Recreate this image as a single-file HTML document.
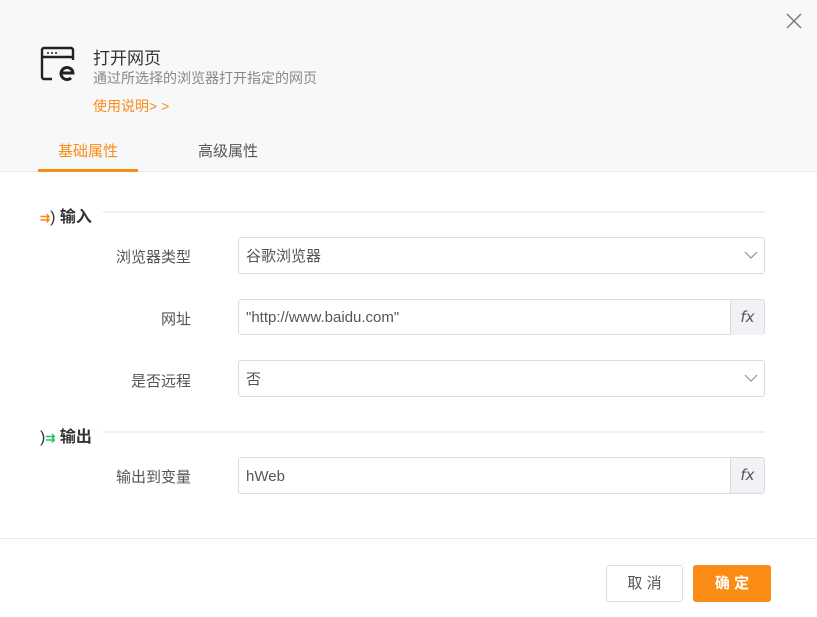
<!DOCTYPE html>
<html><head><meta charset="utf-8"><style>
*{box-sizing:border-box;margin:0;padding:0}
body{width:817px;height:617px;background:#fff;font-family:"Liberation Sans","Noto Sans CJK SC",sans-serif;position:relative;overflow:hidden;color:#333}
.hdr{position:absolute;left:0;top:0;width:817px;height:172px;background:#f7f8fa;border-bottom:1px solid #e8eaee}
.abs{position:absolute;white-space:nowrap}
.inp{position:absolute;left:238px;width:527px;height:37px;border:1px solid #d9dce3;border-radius:3px;background:#fff;font-size:15px;color:#555;padding-left:7px;line-height:37px}
.fx{position:absolute;right:0;top:0;width:34px;height:35px;background:#f0f2f5;border-left:1px solid #d9dce3;font-family:"DejaVu Sans",sans-serif;font-style:italic;font-size:15px;text-align:center;line-height:35px;color:#555}
.lbl{position:absolute;right:626px;font-size:15px;color:#555;white-space:nowrap}
.chev{position:absolute;right:6px;top:11px}
.sec{position:absolute;left:40px;font-size:16px;font-weight:600;color:#333}
.line{position:absolute;height:2px;background:#eef0f3}
</style></head><body>
<div class="hdr"></div>
<svg class="abs" style="left:785px;top:12px" width="18" height="18" viewBox="0 0 18 18"><path d="M2 2L16 16M16 2L2 16" stroke="#777" stroke-width="1.4"/></svg>
<svg class="abs" style="left:40px;top:46px" width="36" height="37" viewBox="0 0 36 37">
<path d="M12 33H4a2 2 0 0 1-2-2V4a2 2 0 0 1 2-2h27a2 2 0 0 1 2 2v10" fill="none" stroke="#222" stroke-width="2.4"/>
<path d="M2 11H33" stroke="#222" stroke-width="2.4"/>
<circle cx="8" cy="7" r="1" fill="#222"/><circle cx="12" cy="7" r="1" fill="#222"/><circle cx="16" cy="7" r="1" fill="#222"/>
<path d="M22 27h11a6 6 0 1 0-2 5" fill="none" stroke="#222" stroke-width="3"/>
</svg>
<div class="abs" style="left:93px;top:44px;font-size:17px;color:#333">打开网页</div>
<div class="abs" style="left:93px;top:68px;font-size:14px;color:#888">通过所选择的浏览器打开指定的网页</div>
<div class="abs" style="left:93px;top:96px;font-size:14px;color:#fa8c16">使用说明&gt; &gt;</div>
<div class="abs" style="left:58px;top:140px;font-size:15px;color:#fa8c16">基础属性</div>
<div class="abs" style="left:38px;top:169px;width:100px;height:3px;background:#fa8c16"></div>
<div class="abs" style="left:198px;top:140px;font-size:15px;color:#555">高级属性</div>

<div class="sec" style="top:203px"><span style="color:#fa8c16;font-size:12px">⇉</span><span style="font-weight:normal">)</span> 输入</div>
<div class="line" style="left:103px;top:211px;width:662px"></div>
<div class="lbl" style="top:246px">浏览器类型</div>
<div class="inp" style="top:237px">谷歌浏览器<svg class="chev" width="14" height="12" viewBox="0 0 14 12"><path d="M1 3l6 6 6-6" fill="none" stroke="#8a93a8" stroke-width="1.2"/></svg></div>
<div class="lbl" style="top:308px">网址</div>
<div class="inp" style="top:299px;height:36px;line-height:36px">"http://www.baidu.com"<div class="fx">fx</div></div>
<div class="lbl" style="top:370px">是否远程</div>
<div class="inp" style="top:360px">否<svg class="chev" width="14" height="12" viewBox="0 0 14 12"><path d="M1 3l6 6 6-6" fill="none" stroke="#8a93a8" stroke-width="1.2"/></svg></div>

<div class="sec" style="top:423px"><span style="font-weight:normal">)</span><span style="color:#22c55e;font-size:12px">⇉</span> 输出</div>
<div class="line" style="left:103px;top:431px;width:662px"></div>
<div class="lbl" style="top:466px">输出到变量</div>
<div class="inp" style="top:457px">hWeb<div class="fx">fx</div></div>

<div class="abs" style="left:0;top:538px;width:817px;height:1px;background:#e8eaee"></div>
<div class="abs" style="left:606px;top:565px;width:77px;height:37px;border:1px solid #d9dce3;border-radius:3px;font-size:15px;color:#555;text-align:center;line-height:35px">取 消</div>
<div class="abs" style="left:693px;top:565px;width:78px;height:37px;background:#fa8c16;border-radius:3px;font-size:15px;color:#fff;text-align:center;line-height:37px;font-weight:bold">确 定</div>
</body></html>
